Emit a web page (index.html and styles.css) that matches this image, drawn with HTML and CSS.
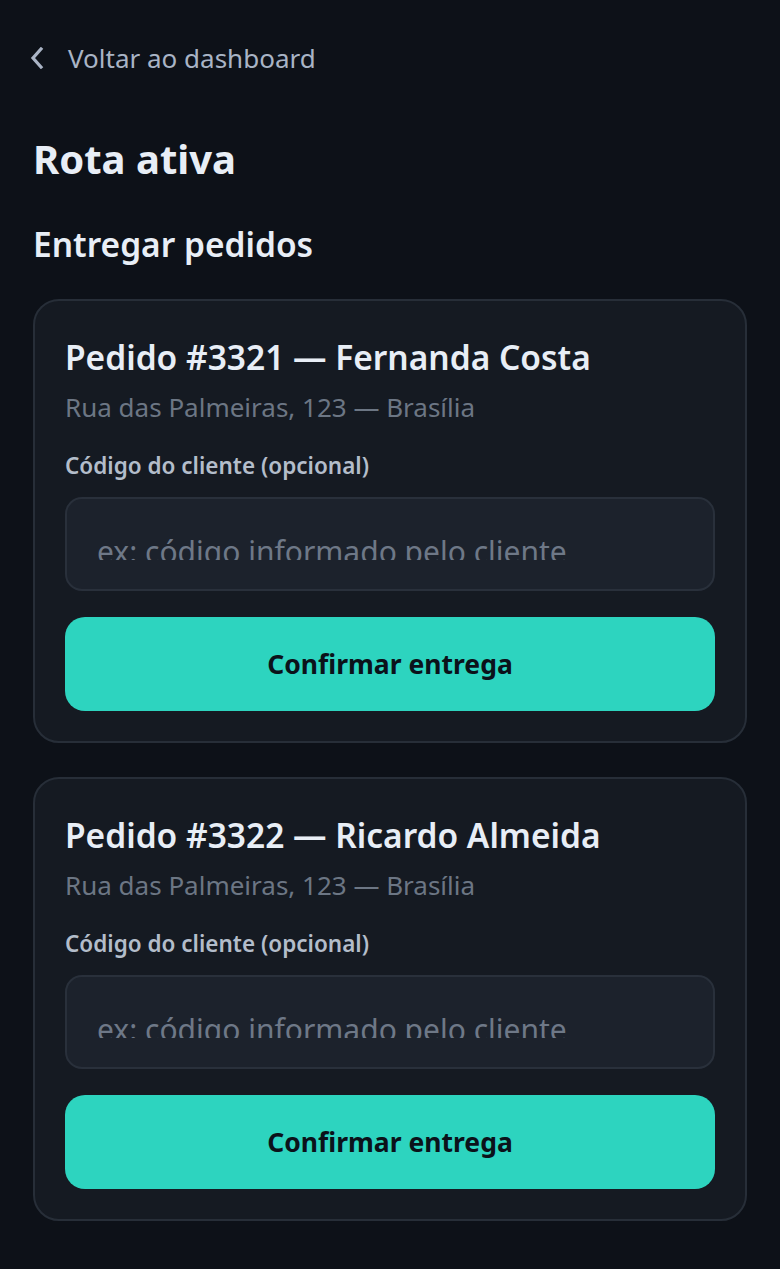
FILE: index.html
```html
<!DOCTYPE html>
<html lang="pt-BR">
<head>
<meta charset="utf-8">
<title>Rota ativa</title>
<link rel="stylesheet" href="styles.css">
</head>
<body>
<main class="page">
  <a class="back" href="#">
    <svg class="back-icon" width="14" height="22" viewBox="0 0 14 22" aria-hidden="true"><path d="M11 2 L3 11 L11 20" fill="none" stroke="currentColor" stroke-width="3.2" stroke-linecap="square" stroke-linejoin="miter"/></svg>
    <span>Voltar ao dashboard</span>
  </a>
  <h1 class="title">Rota ativa</h1>
  <h2 class="subtitle">Entregar pedidos</h2>
  <section class="list">
    <article class="card">
      <h3 class="card-title">Pedido #3321 — Fernanda Costa</h3>
      <p class="card-addr">Rua das Palmeiras, 123 — Brasília</p>
      <label class="field-label" for="c1">Código do cliente (opcional)</label>
      <div class="field-box"><input class="field" id="c1" type="text" placeholder="ex: código informado pelo cliente"></div>
      <button class="btn" type="button">Confirmar entrega</button>
    </article>
    <article class="card">
      <h3 class="card-title">Pedido #3322 — Ricardo Almeida</h3>
      <p class="card-addr">Rua das Palmeiras, 123 — Brasília</p>
      <label class="field-label" for="c2">Código do cliente (opcional)</label>
      <div class="field-box"><input class="field" id="c2" type="text" placeholder="ex: código informado pelo cliente"></div>
      <button class="btn" type="button">Confirmar entrega</button>
    </article>
  </section>
</main>
</body>
</html>
```
FILE: styles.css
```css
* { box-sizing: border-box; }
html, body {
  margin: 0;
  background: #0d1118;
  color: #e6ecf4;
  font-family: "Noto Sans", "Open Sans", sans-serif;
}
.page {
  padding: 38px 33px 40px;
}
.back {
  display: flex;
  align-items: center;
  gap: 24px;
  color: #a9b4c5;
  text-decoration: none;
  font-size: 26px;
  line-height: 40px;
  margin-left: -3px;
}
.back-icon { color: #aab4c5; flex: none; }
.title {
  margin: 55px 0 0;
  font-size: 40px;
  font-weight: 700;
  line-height: 52px;
  color: #e8eef6;
}
.subtitle {
  margin: 39px 0 0;
  font-size: 33.5px;
  font-weight: 600;
  line-height: 40px;
  color: #e8eef6;
}
.list {
  display: flex;
  flex-direction: column;
  gap: 34px;
  margin-top: 35px;
}
.card {
  display: flex;
  flex-direction: column;
  background: #151a22;
  border: 2px solid #272e38;
  border-radius: 26px;
  padding: 30px 30px 30px;
}
.card-title {
  margin: 0;
  font-size: 33.5px;
  font-weight: 600;
  line-height: 52px;
  color: #e8eef6;
}
.card-addr {
  margin: 7px 0 0;
  font-size: 26px;
  line-height: 34px;
  color: #6c7684;
}
.field-label {
  margin-top: 27px;
  font-size: 22.5px;
  font-weight: 600;
  line-height: 30px;
  color: #b3bdca;
}
.field-box {
  margin-top: 16px;
  height: 94px;
  background: #1c222c;
  border: 2px solid #29303b;
  border-radius: 17px;
  overflow: hidden;
}
.field {
  display: block;
  height: 61px;
  width: 100%;
  background: transparent;
  border: 0;
  padding: 44px 30px 0;
  font-family: inherit;
  font-size: 30px;
  color: #e6ecf4;
  outline: none;
}
.field::placeholder { color: #6e7887; }
.btn {
  margin-top: 26px;
  height: 94px;
  width: 100%;
  border: 0;
  border-radius: 20px;
  background: #2dd4bf;
  color: #0b121a;
  font-family: inherit;
  font-size: 26.5px;
  font-weight: 700;
}
```
